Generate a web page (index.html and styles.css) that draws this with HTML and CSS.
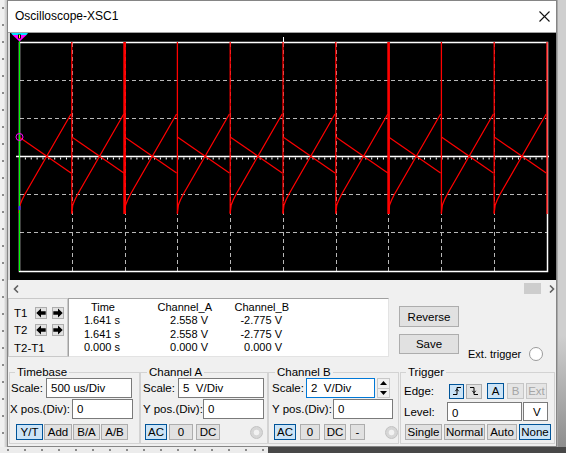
FILE: index.html
```html
<!DOCTYPE html>
<html>
<head>
<meta charset="utf-8">
<title>Oscilloscope-XSC1</title>
<link rel="stylesheet" href="styles.css">
</head>
<body>
<div class="screen">
  <div class="canvas-left"></div>
  <div class="window">
    <div class="titlebar">
      <span class="title">Oscilloscope-XSC1</span>
      <svg class="close" width="11" height="11" viewBox="0 0 11 11"><path d="M0.5,0.5 L10.5,10.5 M10.5,0.5 L0.5,10.5" stroke="#111" stroke-width="1.1"/></svg>
    </div>
    <div class="scope">
      <svg class="plot" width="546" height="247" viewBox="0 0 546 247">
        <defs>
          <g id="per">
            <line x1="0" y1="104" x2="52" y2="140" stroke="#ff0000" stroke-width="1.25"/>
            <path d="M0,180 L1,172 L3,167 L6,161 L52,81" fill="none" stroke="#ff0000" stroke-width="1.25"/>
            <line x1="52.8" y1="9" x2="52.8" y2="181" stroke="#ff0000" stroke-width="1.3"/>
          </g>
        </defs>
        <rect x="0" y="0" width="546" height="247" fill="#000"/>
        <g stroke="#b8b8b8" stroke-width="1" stroke-dasharray="4 3">
          <line x1="62.5" y1="10" x2="62.5" y2="238"/>
          <line x1="115.5" y1="10" x2="115.5" y2="238"/>
          <line x1="167.5" y1="10" x2="167.5" y2="238"/>
          <line x1="220.5" y1="10" x2="220.5" y2="238"/>
          <line x1="273.5" y1="10" x2="273.5" y2="238"/>
          <line x1="326.5" y1="10" x2="326.5" y2="238"/>
          <line x1="378.5" y1="10" x2="378.5" y2="238"/>
          <line x1="431.5" y1="10" x2="431.5" y2="238"/>
          <line x1="484.5" y1="10" x2="484.5" y2="238"/>
          <line x1="10" y1="47.5" x2="537" y2="47.5"/>
          <line x1="10" y1="85.5" x2="537" y2="85.5"/>
          <line x1="10" y1="161.5" x2="537" y2="161.5"/>
          <line x1="10" y1="199.5" x2="537" y2="199.5"/>
        </g>
        <rect x="9.5" y="9.5" width="528" height="229" fill="none" stroke="#ffffff" stroke-width="1.5"/>
        <line x1="6" y1="123.5" x2="539" y2="123.5" stroke="#ffffff" stroke-width="1.5"/>
        <line x1="9" y1="125.5" x2="537" y2="125.5" stroke="#ffffff" stroke-width="2" stroke-dasharray="1 4.87"/>
        <line x1="273.5" y1="4" x2="273.5" y2="9" stroke="#ffffff" stroke-width="1"/>
        <use href="#per" x="9"/>
        <use href="#per" x="61.8"/>
        <use href="#per" x="114.6"/>
        <use href="#per" x="167.4"/>
        <use href="#per" x="220.2"/>
        <use href="#per" x="273"/>
        <use href="#per" x="325.8"/>
        <use href="#per" x="378.6"/>
        <use href="#per" x="431.4"/>
        <use href="#per" x="484.2"/>
        <line x1="114.6" y1="9" x2="114.6" y2="181" stroke="#ff0000" stroke-width="2.6"/>
        <line x1="378.6" y1="9" x2="378.6" y2="181" stroke="#ff0000" stroke-width="2.6"/>
        <line x1="9.5" y1="7" x2="9.5" y2="238" stroke="#00ff00" stroke-width="1"/>
        <circle cx="9.5" cy="104" r="3.5" fill="none" stroke="#ff00ff" stroke-width="1"/>
        <rect x="8.5" y="173" width="2" height="4" fill="#3030ff"/>
        <polygon points="1,0 18,0 16.5,2 2.5,2" fill="#00e5ff"/>
        <polygon points="2.5,2 16.5,2 9.5,8.5" fill="#ff00ff"/>
        <rect x="8" y="1.5" width="3" height="4" fill="#000"/>
        <rect x="9" y="2" width="1" height="3" fill="#ffff00"/>
      </svg>
    </div>
    <div class="scrollrow">
      <svg width="6" height="8" viewBox="0 0 6 8"><path d="M5,0.5 L1.5,4 L5,7.5" fill="none" stroke="#606060" stroke-width="1.6"/></svg>
      <span class="spacer"></span>
      <span class="thumb"></span>
      <svg width="6" height="8" viewBox="0 0 6 8"><path d="M1,0.5 L4.5,4 L1,7.5" fill="none" stroke="#606060" stroke-width="1.6"/></svg>
    </div>
    <div class="measure">
      <div class="tbox">
        <span class="tlabel">T1</span>
        <span class="arrow"><svg width="10" height="10" viewBox="0 0 10 10"><path d="M0.3,5 L5,0.5 L5,3.2 L9.7,3.2 L9.7,6.8 L5,6.8 L5,9.5 Z" fill="#000"/></svg></span>
        <span class="arrow"><svg width="10" height="10" viewBox="0 0 10 10"><path d="M9.7,5 L5,0.5 L5,3.2 L0.3,3.2 L0.3,6.8 L5,6.8 L5,9.5 Z" fill="#000"/></svg></span>
        <span class="tlabel">T2</span>
        <span class="arrow"><svg width="10" height="10" viewBox="0 0 10 10"><path d="M0.3,5 L5,0.5 L5,3.2 L9.7,3.2 L9.7,6.8 L5,6.8 L5,9.5 Z" fill="#000"/></svg></span>
        <span class="arrow"><svg width="10" height="10" viewBox="0 0 10 10"><path d="M9.7,5 L5,0.5 L5,3.2 L0.3,3.2 L0.3,6.8 L5,6.8 L5,9.5 Z" fill="#000"/></svg></span>
        <span class="tlabel wide">T2-T1</span>
      </div>
      <div class="readout">
        <span class="c1 head">Time</span><span class="c2 head">Channel_A</span><span class="c3 head">Channel_B</span>
        <span class="c1">1.641 s</span><span class="c2">2.558 V</span><span class="c3">-2.775 V</span>
        <span class="c1">1.641 s</span><span class="c2">2.558 V</span><span class="c3">-2.775 V</span>
        <span class="c1">0.000 s</span><span class="c2">0.000 V</span><span class="c3">0.000 V</span>
      </div>
      <div class="side">
        <span class="btn big">Reverse</span>
        <span class="btn big save">Save</span>
      </div>
      <div class="ext">
        <span>Ext. trigger</span>
        <span class="radio white"></span>
      </div>
    </div>
    <div class="groups">
      <fieldset class="grp timebase">
        <legend>Timebase</legend>
        <div class="row r1"><span class="lbl" style="width:36px">Scale:</span><span class="field" style="width:86px">500 us/Div</span></div>
        <div class="row r2"><span class="lbl tight" style="width:62px">X pos.(Div):</span><span class="field" style="width:61px">0</span></div>
        <div class="row r3 tb-btns"><span class="btn on w27">Y/T</span><span class="btn w28">Add</span><span class="btn w27">B/A</span><span class="btn w27">A/B</span></div>
      </fieldset>
      <fieldset class="grp cha">
        <legend>Channel A</legend>
        <div class="row r1"><span class="lbl" style="width:37px">Scale:</span><span class="field" style="width:86px">5  V/Div</span></div>
        <div class="row r2"><span class="lbl" style="width:62px">Y pos.(Div):</span><span class="field" style="width:61px">0</span></div>
        <div class="row r3 cha-btns"><span class="btn on w22">AC</span><span class="btn w24">0</span><span class="btn w24 dc">DC</span><span class="radio gray ra"></span></div>
      </fieldset>
      <fieldset class="grp chb">
        <legend>Channel B</legend>
        <div class="row r1"><span class="lbl" style="width:37px">Scale:</span><span class="field focus" style="width:69px">2  V/Div</span>
          <span class="spin"><span class="spin-up"><svg width="7" height="4" viewBox="0 0 7 4"><path d="M0,4 L3.5,0 L7,4 Z" fill="#000"/></svg></span><span class="spin-dn"><svg width="7" height="4" viewBox="0 0 7 4"><path d="M0,0 L3.5,4 L7,0 Z" fill="#000"/></svg></span></span>
        </div>
        <div class="row r2"><span class="lbl" style="width:64px">Y pos.(Div):</span><span class="field" style="width:60px">0</span></div>
        <div class="row r3 chb-btns"><span class="btn on w22">AC</span><span class="btn w20">0</span><span class="btn w22">DC</span><span class="btn w15">-</span><span class="radio gray rb"></span></div>
      </fieldset>
      <fieldset class="grp trig">
        <legend>Trigger</legend>
        <div class="row t1"><span class="lbl" style="width:45px">Edge:</span>
          <span class="btn on e14"><svg width="10" height="10" viewBox="0 0 10 10"><path d="M1,8.5 H5 V1.5 H9" fill="none" stroke="#000" stroke-width="1"/><path d="M3.3,5.2 L5,3.2 L6.7,5.2" fill="none" stroke="#000" stroke-width="1"/></svg></span>
          <span class="btn e15"><svg width="10" height="10" viewBox="0 0 10 10"><path d="M1,1.5 H5 V8.5 H9" fill="none" stroke="#000" stroke-width="1"/><path d="M3.3,4.8 L5,6.8 L6.7,4.8" fill="none" stroke="#000" stroke-width="1"/></svg></span>
          <span class="btn on w17 ga">A</span>
          <span class="btn off w17">B</span>
          <span class="btn off w21">Ext</span>
        </div>
        <div class="row t2"><span class="lbl" style="width:43px">Level:</span><span class="field lvl" style="width:75px">0</span><span class="field unit" style="width:25px">V</span></div>
        <div class="row t3"><span class="btn w37">Single</span><span class="btn w41">Normal</span><span class="btn w30">Auto</span><span class="btn on w32">None</span></div>
      </fieldset>
    </div>
  </div>
  <div class="canvas-right"></div>
  <div class="canvas-bottom"></div>
</div>
</body>
</html>
```

FILE: styles.css
```css
html, body {
  margin: 0;
  padding: 0;
}
body {
  width: 566px;
  height: 453px;
  overflow: hidden;
  font-family: "Liberation Sans", Arial, sans-serif;
  font-size: 11px;
  color: #000;
  background: #e9e9e9;
}
.screen {
  display: grid;
  grid-template-columns: 7px 550px 9px;
  grid-template-rows: 447px 6px;
  width: 566px;
  height: 453px;
}
.canvas-left {
  grid-column: 1;
  grid-row: 1;
  background-color: #f0f0f0;
  background-image:
    linear-gradient(to right, transparent 4px, #d9d9d9 5px, #c4c4c4 7px),
    radial-gradient(circle at 3px 8px, #8a8a8a 0.9px, transparent 1.4px);
  background-size: 7px 100%, 7px 17px;
  background-repeat: no-repeat, repeat;
}
.canvas-right {
  grid-column: 3;
  grid-row: 1;
  background: linear-gradient(to bottom, #cfcfcf 0, #cfcfcf 75%, #8e8e8e 100%);
  border-left: 1px solid #a8a8a8;
}
.canvas-bottom {
  grid-column: 1 / 4;
  grid-row: 2;
  background:
    linear-gradient(to right, transparent 268px, #484848 268px),
    radial-gradient(circle at 8px 3px, #8a8a8a 0.9px, transparent 1.4px);
  background-size: 100% 100%, 17px 6px;
  background-color: #ececec;
}
.window {
  grid-column: 2;
  grid-row: 1;
  box-sizing: border-box;
  border: 1px solid #858585;
  background: #f0f0f0;
  display: flex;
  flex-direction: column;
  overflow: hidden;
}
.titlebar {
  height: 31px;
  flex: none;
  background: #fff;
  display: flex;
  align-items: center;
  justify-content: space-between;
  padding: 0 6px 1px 7px;
  box-sizing: border-box;
  font-size: 12px;
}
.close {
  display: block;
}
.scope {
  flex: none;
  height: 248px;
  box-sizing: border-box;
  border-top: 1px solid #a0a0a0;
  padding-left: 2px;
  background: #d9d9d9;
}
.plot {
  display: block;
}
.scrollrow {
  flex: none;
  height: 17px;
  display: flex;
  align-items: center;
  padding: 0 1px 0 5px;
}
.scrollrow svg {
  display: block;
}
.spacer {
  flex: 1;
}
.thumb {
  width: 17px;
  height: 11px;
  background: #cdcdcd;
  margin-right: 8px;
}
.measure {
  flex: none;
  display: flex;
  height: 60px;
  margin-top: 1px;
}
.tbox {
  width: 60px;
  height: 59px;
  box-sizing: border-box;
  border: 1px solid #c9c9c9;
  padding: 8px 0 0 5px;
  display: grid;
  grid-template-columns: 16px 12px 12px;
  grid-template-rows: 12px 12px 14px;
  column-gap: 5px;
  row-gap: 5px;
}
.tlabel {
  display: flex;
  align-items: center;
  white-space: nowrap;
  font-size: 11.5px;
}
.tlabel.wide {
  grid-column: 1 / 4;
}
.arrow {
  box-sizing: border-box;
  width: 12px;
  height: 12px;
  background: #e1e1e1;
  border: 1px solid #adadad;
  display: flex;
  align-items: center;
  justify-content: center;
}
.arrow svg {
  display: block;
}
.readout {
  width: 321px;
  height: 59px;
  box-sizing: border-box;
  border: 1px solid;
  border-color: #a0a0a0 #e3e3e3 #e3e3e3 #a0a0a0;
  background: #fff;
  display: grid;
  grid-template-columns: 56px 93px 76px;
  grid-auto-rows: 13.3px;
  padding-top: 2px;
  line-height: 13.3px;
}
.readout span {
  text-align: right;
  white-space: nowrap;
}
.c1 { padding-right: 5px; }
.c2 { padding-right: 10px; }
.c3 { padding-right: 12px; }
.c1.head { padding-right: 10px; }
.c2.head { padding-right: 6px; }
.c3.head { padding-right: 5px; }
.side {
  margin-left: 10px;
  padding-top: 8px;
  display: flex;
  flex-direction: column;
  gap: 7px;
}
.btn {
  box-sizing: border-box;
  height: 16px;
  background: #e1e1e1;
  border: 1px solid #adadad;
  display: flex;
  align-items: center;
  justify-content: center;
  white-space: nowrap;
  flex: none;
}
.btn svg {
  display: block;
}
.btn.big {
  width: 60px;
  height: 21px;
  font-size: 11.5px;
}
.btn.big.save {
  height: 20px;
}
.btn.on {
  background: #cce4f7;
  border-color: #005499;
}
.btn.off {
  color: #a6a6a6;
  background: #e5e5e5;
  border-color: #c6c6c6;
}
.ext {
  margin-left: 9px;
  margin-top: 49px;
  height: 14px;
  display: flex;
  align-items: center;
  gap: 8px;
}
.radio {
  box-sizing: border-box;
  width: 13px;
  height: 13px;
  border-radius: 50%;
  flex: none;
}
.radio.white {
  width: 14px;
  height: 14px;
  background: #fff;
  border: 1px solid #9b9b9b;
}
.radio.gray {
  border: 1px solid #c2c2c2;
  background: radial-gradient(circle, #f2f2f2 0, #f2f2f2 2.5px, #d6d6d6 3.2px, #d6d6d6 100%);
}
.groups {
  flex: none;
  display: flex;
  padding-left: 1px;
  margin-top: 8px;
}
.grp {
  margin: 0;
  padding: 0;
  min-width: 0;
  box-sizing: border-box;
  height: 78px;
  border: 1px solid #d3d3d3;
}
.grp legend {
  padding: 0 2px;
  margin-left: 5px;
  line-height: 12px;
  font-size: 11.5px;
}
.cha legend, .chb legend {
  margin-left: 6px;
}
.timebase { width: 131px; }
.cha { width: 128px; }
.chb { width: 131px; }
.trig { width: 155px; margin-left: 1px; }
.row {
  display: flex;
  align-items: center;
}
.lbl {
  flex: none;
  white-space: nowrap;
  padding-left: 1px;
  box-sizing: border-box;
  font-size: 11.5px;
}
.cha .lbl { padding-left: 2px; }
.chb .lbl, .trig .lbl { padding-left: 3px; }
.lbl.tight { padding-left: 0; }
.timebase .lbl:first-child { width: 37px; }
.field {
  box-sizing: border-box;
  height: 20px;
  background: #fff;
  border: 1px solid #7a7a7a;
  padding-left: 4px;
  display: flex;
  align-items: center;
  white-space: pre;
  flex: none;
  font-size: 11.5px;
}
.field.focus {
  border-color: #0078d7;
}
.r2 {
  margin-top: 1px;
}
.r3 {
  margin-top: 5px;
  gap: 1px;
  font-size: 11.5px;
}
.tb-btns { padding-left: 6px; }
.cha-btns { padding-left: 4px; gap: 2px; }
.cha-btns .dc { margin-left: 1px; }
.cha-btns .ra { margin-left: 28px; margin-top: 1px; }
.chb-btns { padding-left: 5px; gap: 4px; }
.chb-btns .rb { margin-left: 16px; margin-top: 1px; }
.spin {
  margin-left: 2px;
  width: 13px;
  height: 20px;
  display: flex;
  flex-direction: column;
  box-sizing: border-box;
  border: 1px solid #c8c8c8;
  background: #f0f0f0;
}
.spin-up, .spin-dn {
  flex: 1;
  display: flex;
  align-items: center;
  justify-content: center;
}
.spin-up {
  border-bottom: 1px solid #c8c8c8;
}
.spin svg { display: block; }
.w15 { width: 15px; }
.w17 { width: 17px; height: 16px; }
.w20 { width: 20px; }
.w21 { width: 21px; height: 16px; }
.w22 { width: 22px; }
.w24 { width: 24px; }
.w27 { width: 27px; }
.w28 { width: 28px; }
.w30 { width: 30px; }
.w32 { width: 32px; }
.w37 { width: 37px; }
.w41 { width: 41px; }
.e14 { width: 15px; height: 15px; }
.e15 { width: 16px; height: 15px; margin-left: 2px; }
.t1 {
  margin-top: 5px;
  height: 16px;
  font-size: 11.5px;
}
.t1 .lbl { width: 48px !important; }
.t1 .ga { margin-left: 5px; }
.t1 .off { margin-left: 2px; }
.t1 .ga + .off { margin-left: 3px; }
.t2 {
  margin-top: 3px;
}
.t2 .lbl { width: 46px !important; }
.field.lvl {
  height: 19px;
  align-items: flex-end;
  padding-bottom: 1px;
}
.field.unit {
  height: 19px;
  margin-left: 1px;
  padding-left: 9px;
}
.t3 {
  margin-top: 3px;
  padding-left: 4px;
  gap: 2px;
  font-size: 11.5px;
}
```
